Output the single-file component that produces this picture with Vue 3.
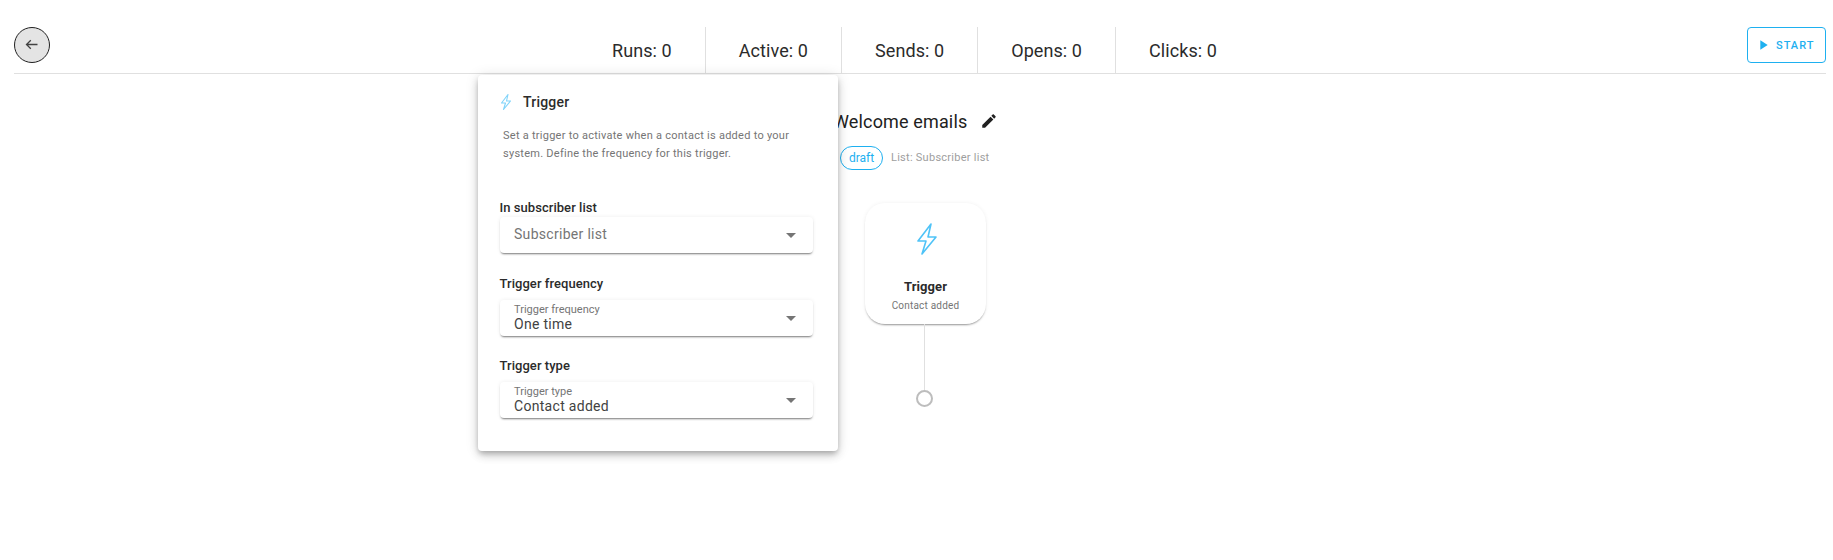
<script setup>
const stats = ['Runs: 0', 'Active: 0', 'Sends: 0', 'Opens: 0', 'Clicks: 0']
const fields = [
  { label: 'In subscriber list', floating: '', value: 'Subscriber list' },
  { label: 'Trigger frequency', floating: 'Trigger frequency', value: 'One time' },
  { label: 'Trigger type', floating: 'Trigger type', value: 'Contact added' }
]
</script>

<template>
  <div class="page">
    <header class="topbar">
      <button class="back" aria-label="Back">
        <svg viewBox="0 0 16 16" width="16" height="16"><path d="M13.500 7.500H2.500M6.800 3.200 2.500 7.500l4.300 4.300" fill="none" stroke="#424242" stroke-width="1.300" /></svg>
      </button>
      <div class="stats">
        <div v-for="s in stats" :key="s" class="stat">{{ s }}</div>
      </div>
      <button class="start">
        <svg viewBox="0 0 24 24" width="16" height="16"><path d="M8 5v14l11-7z" fill="#1eb0f0" /></svg>
        <span>START</span>
      </button>
    </header>

    <aside class="panel">
      <div class="panel-head">
        <svg class="bolt-small" viewBox="0 0 20 32" width="10" height="16"><path d="M14 1 1 18h8L5 31 19 14h-8z" fill="none" stroke="#81d4fa" stroke-width="2.200" stroke-linejoin="round" /></svg>
        <span>Trigger</span>
      </div>
      <p class="desc">Set a trigger to activate when a contact is added to your system. Define the frequency for this trigger.</p>
      <div class="fields">
        <div v-for="f in fields" :key="f.label" class="field" :class="{ plain: !f.floating }">
          <div class="field-label">{{ f.label }}</div>
          <div class="select">
            <div class="select-text">
              <div v-if="f.floating" class="floating">{{ f.floating }}</div>
              <div :class="f.floating ? 'value' : 'placeholder'">{{ f.value }}</div>
            </div>
            <svg viewBox="0 0 24 24" width="24" height="24" class="caret"><path d="M7 10l5 5 5-5z" fill="#757575" /></svg>
          </div>
        </div>
      </div>
    </aside>

    <main class="canvas">
      <div class="title-row">
        <h1>Welcome emails</h1>
        <svg viewBox="0 0 24 24" width="18" height="18"><path d="M3 17.250V21h3.750L17.810 9.940l-3.750-3.750L3 17.250zM20.710 7.040c.39-.39.39-1.020 0-1.410l-2.340-2.340c-.39-.39-1.020-.39-1.410 0l-1.830 1.830 3.750 3.750 1.830-1.830z" fill="#212121" /></svg>
      </div>
      <div class="meta-row">
        <span class="chip">draft</span>
        <span class="list">List: Subscriber list</span>
      </div>
      <div class="node">
        <svg class="bolt" viewBox="0 0 20 32" width="20" height="32"><path d="M14 1 1 18h8L5 31 19 14h-8z" fill="none" stroke="#4fc3f7" stroke-width="1.600" stroke-linejoin="round" /></svg>
        <div class="node-title">Trigger</div>
        <div class="node-sub">Contact added</div>
      </div>
      <div class="connector"></div>
      <div class="dot"></div>
    </main>
  </div>
</template>

<style>
html, body { margin: 0; background: #fff; }
</style>

<style scoped>
.page {
  position: relative;
  width: 1833px;
  height: 560px;
  overflow: hidden;
  background: #fff;
  font-family: Roboto, "Liberation Sans", sans-serif;
  color: #212121;
}
.topbar {
  display: flex;
  align-items: flex-start;
  box-sizing: border-box;
  margin: 0 7px 0 14px;
  padding-top: 27px;
  height: 74px;
  border-bottom: 1px solid #e0e0e0;
}
.back {
  box-sizing: border-box;
  width: 36px;
  height: 36px;
  padding: 0;
  display: flex;
  align-items: center;
  justify-content: center;
  border: 1px solid #212121;
  border-radius: 50%;
  background: #e4e4e4;
}
.stats {
  display: flex;
  margin-left: 529px;
}
.stat {
  display: flex;
  align-items: center;
  box-sizing: border-box;
  height: 46px;
  padding: 0 33px;
  font-size: 18px;
  letter-spacing: .08px;
  color: #2b2b2b;
  border-right: 1px solid #e0e0e0;
}
.stat:last-child { border-right: none; }
.start {
  box-sizing: border-box;
  margin-left: auto;
  width: 79px;
  height: 36px;
  display: flex;
  align-items: center;
  gap: 5px;
  padding: 0 0 0 7px;
  border: 1px solid #1eb0f0;
  border-radius: 4px;
  background: #fff;
  color: #1eb0f0;
  font-family: inherit;
  font-size: 11px;
  font-weight: 500;
  letter-spacing: 1px;
}
.panel {
  position: absolute;
  left: 478px;
  top: 75px;
  width: 360px;
  height: 376px;
  box-sizing: border-box;
  padding: 18px 25px 0 22px;
  background: #fff;
  border-radius: 4px;
  box-shadow: 0 3px 5px -1px rgba(0,0,0,.2), 0 5px 8px rgba(0,0,0,.14), 0 1px 14px rgba(0,0,0,.12);
}
.panel-head {
  display: flex;
  align-items: center;
  gap: 12px;
  padding-left: 1px;
  font-size: 14px;
  font-weight: 500;
  letter-spacing: .2px;
  line-height: 18px;
  color: #2b2b2b;
}
.desc {
  margin: 16px 0 0 3px;
  font-size: 11px;
  line-height: 18px;
  letter-spacing: .26px;
  color: #757575;
}
.fields {
  margin-top: 36px;
  display: flex;
  flex-direction: column;
  gap: 21px;
}
.field.plain { padding-bottom: 1px; }
.field-label {
  margin-left: -.5px;
  font-size: 13px;
  font-weight: 500;
  line-height: 18px;
  letter-spacing: .05px;
  color: #2b2b2b;
}
.select {
  box-sizing: border-box;
  height: 36px;
  margin-top: 7px;
  display: flex;
  align-items: center;
  justify-content: space-between;
  padding: 0 10px 0 14px;
  background: #fff;
  border-radius: 4px;
  box-shadow: 0 2px 2px -1px rgba(0,0,0,.5), 0 0 4px rgba(0,0,0,.07);
}
.plain .select { margin-top: 0; }
.select-text { padding-bottom: 2px; }
.placeholder { font-size: 14px; letter-spacing: .3px; color: #757575; }
.floating { font-size: 11px; line-height: 13px; color: #757575; }
.value { font-size: 14px; line-height: 16px; letter-spacing: .3px; color: #424242; }
.canvas {
  display: flex;
  flex-direction: column;
  align-items: flex-start;
  padding-left: 833px;
}
.title-row {
  display: flex;
  align-items: center;
  gap: 13px;
  margin-top: 35px;
  height: 24px;
}
h1 {
  margin: 0;
  font-size: 18px;
  font-weight: 400;
  letter-spacing: .15px;
  color: #212121;
}
.meta-row {
  display: flex;
  align-items: center;
  gap: 8px;
  margin: 13px 0 0 7px;
}
.chip {
  box-sizing: border-box;
  height: 24px;
  width: 43px;
  display: flex;
  align-items: center;
  justify-content: center;
  border: 1px solid #1eb0f0;
  border-radius: 12px;
  font-size: 12px;
  color: #1eb0f0;
}
.list { padding-bottom: 2px; font-size: 11px; color: #9e9e9e; letter-spacing: .26px; }
.node {
  box-sizing: border-box;
  width: 121px;
  height: 121px;
  margin: 33px 0 0 32px;
  padding-top: 20px;
  display: flex;
  flex-direction: column;
  align-items: center;
  background: #fff;
  border-radius: 20px;
  box-shadow: 0 2px 2px -1px rgba(0,0,0,.4), 0 0 4px rgba(0,0,0,.06);
}
.bolt { margin-left: 2px; }
.node-title { margin-top: 24px; font-size: 13px; font-weight: 700; line-height: 16px; letter-spacing: .1px; color: #2b2b2b; }
.node-sub { margin-top: 4px; font-size: 10px; line-height: 14px; color: #757575; letter-spacing: .2px; }
.connector { width: 1px; height: 66px; margin-left: 91px; background: #e0e0e0; }
.dot {
  box-sizing: border-box;
  width: 17px;
  height: 17px;
  margin-left: 83px;
  border: 2px solid #bdbdbd;
  border-radius: 50%;
}
</style>
